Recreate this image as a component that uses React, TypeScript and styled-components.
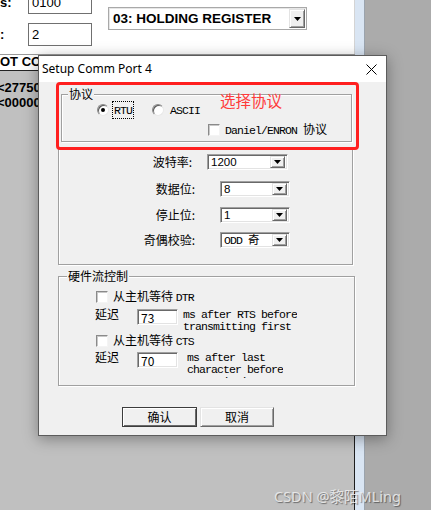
import React from "react";
import styled, { createGlobalStyle, css } from "styled-components";

const cjk = `"Noto Sans CJK SC", sans-serif`;

const GlobalStyle = createGlobalStyle`
  html, body { margin: 0; padding: 0; }
  body {
    background: #ababab;
    font-family: "Liberation Sans", Arial, sans-serif;
  }
`;

const sunken = css`
  box-sizing: border-box;
  background: #fff;
  border: 1px solid;
  border-color: #a0a0a0 #fff #fff #a0a0a0;
  box-shadow: inset 1px 1px 0 #696969, inset -1px -1px 0 #e3e3e3;
`;

const raised = css`
  box-sizing: border-box;
  background: #f0f0f0;
  border: 1px solid;
  border-color: #e3e3e3 #696969 #696969 #e3e3e3;
  box-shadow: inset 1px 1px 0 #fff, inset -1px -1px 0 #a0a0a0;
`;

/* ---------- background window ---------- */

const Page = styled.div`
  position: relative;
  display: flex;
  width: 431px;
  height: 510px;
  overflow: hidden;
  background: #ababab;
`;

const LeftPane = styled.div`
  display: flex;
  flex-direction: column;
  width: 355px;
`;

const TopForm = styled.div`
  display: flex;
  height: 55px;
  background: #fff;
  overflow: hidden;
  box-sizing: border-box;
  border-right: 1px solid #d4d4d4;
`;

const FieldCol = styled.div`
  display: flex;
  flex-direction: column;
  gap: 9px;
  margin-top: -9px;
`;

const FieldRow = styled.div`
  display: flex;
  align-items: center;
  height: 23px;
`;

const FieldLabel = styled.span`
  width: 28px;
  font-size: 13px;
  font-weight: bold;
`;

const FieldInput = styled.div`
  box-sizing: border-box;
  width: 64px;
  height: 23px;
  padding-left: 3px;
  border: 1px solid #707070;
  font-size: 13px;
  line-height: 21px;
`;

const BigCombo = styled.div`
  box-sizing: border-box;
  display: flex;
  align-items: center;
  justify-content: space-between;
  width: 199px;
  height: 23px;
  margin: 7px 0 0 16px;
  padding: 0 1px 0 4px;
  border: 1px solid #a9a9a9;
  box-shadow: inset 1px 1px 0 #e6e6e6;
  font-size: 13.5px;
  font-weight: bold;
`;

const BigDrop = styled.div`
  ${raised};
  display: flex;
  align-items: center;
  justify-content: center;
  width: 16px;
  height: 19px;
`;

const HeaderRow = styled.div`
  height: 15px;
  background: #fff;
  border-top: 1px solid #9a9a9a;
  border-bottom: 1px solid #222;
  box-sizing: content-box;
  font-size: 13px;
  font-weight: bold;
  line-height: 14px;
  white-space: nowrap;
  overflow: hidden;
  margin-top: -1px;
`;

const GrayArea = styled.div`
  flex: 1;
  padding-top: 9px;
  background: #c0c0c0;
  border-right: 1px solid #1e1e1e;
  font-size: 13px;
  font-weight: bold;
  line-height: 15px;
  white-space: nowrap;
`;

const ClipText = styled.div`
  margin-left: -3px;
`;

const BlueStrip = styled.div`
  width: 9px;
  background: #d9e5f3;
  border-right: 1px solid #9aa3ad;
`;

const RightGray = styled.div`
  flex: 1;
  background: #ababab;
`;

/* ---------- dialog ---------- */

const Dialog = styled.div`
  position: absolute;
  left: 38px;
  top: 55px;
  width: 349px;
  height: 381px;
  box-sizing: border-box;
  display: flex;
  flex-direction: column;
  background: #f0f0f0;
  border: 1px solid #5c5c5c;
  box-shadow: 0 3px 14px rgba(0, 0, 0, 0.35);
  font-family: ${cjk};
  font-size: 12px;
  line-height: 14px;
  color: #000;
`;

const TitleBar = styled.div`
  display: flex;
  align-items: center;
  justify-content: space-between;
  height: 26px;
  padding-left: 3px;
  background: #fff;
`;

const Title = styled.span`
  font-family: "Noto Sans", "Liberation Sans", sans-serif;
  font-size: 12px;
`;

const CloseBtn = styled.div`
  display: flex;
  align-items: center;
  justify-content: center;
  width: 30px;
  height: 26px;
`;

const Body = styled.div`
  position: relative;
  display: flex;
  flex-direction: column;
  padding-top: 12px;
`;

const Group = styled.div<{ $left: number; $w: number; $h: number; $mt: number }>`
  position: relative;
  box-sizing: border-box;
  display: flex;
  flex-direction: column;
  margin: ${(p) => p.$mt}px 0 0 ${(p) => p.$left}px;
  width: ${(p) => p.$w}px;
  height: ${(p) => p.$h}px;
  border: 1px solid #a0a0a0;
  box-shadow: inset 1px 1px 0 #fff, 1px 1px 0 #fff;
`;

const GroupLabel = styled.span<{ $left: number }>`
  position: absolute;
  top: -8px;
  left: ${(p) => p.$left}px;
  padding: 0 1px;
  background: #f0f0f0;
`;

const Mono = styled.span`
  font-family: "Liberation Mono", monospace;
  font-size: 11.5px;
  letter-spacing: -0.9px;
`;

const RadioRow = styled.div`
  display: flex;
  align-items: center;
  height: 16px;
  margin: 7px 0 0 35px;
`;

const Radio = styled.span<{ $checked?: boolean }>`
  position: relative;
  box-sizing: border-box;
  width: 12px;
  height: 12px;
  border-radius: 50%;
  background: #fff;
  border: 1px solid;
  border-color: #8a8a8a #e8e8e8 #e8e8e8 #8a8a8a;
  box-shadow: inset 1px 1px 0 #5a5a5a;
  &::after {
    content: "";
    display: ${(p) => (p.$checked ? "block" : "none")};
    position: absolute;
    left: 3px;
    top: 3px;
    width: 4px;
    height: 4px;
    border-radius: 50%;
    background: #000;
  }
`;

const RadioText = styled.span<{ $focus?: boolean; $gap: number; $after: number }>`
  margin: 0 ${(p) => p.$after}px 0 ${(p) => p.$gap}px;
  padding: 0 1px;
  line-height: 14px;
  border: 1px dotted ${(p) => (p.$focus ? "#000" : "transparent")};
`;

const CheckRow = styled.div<{ $left: number; $mt: number }>`
  display: flex;
  align-items: center;
  gap: 5px;
  height: 14px;
  margin: ${(p) => p.$mt}px 0 0 ${(p) => p.$left}px;
  white-space: nowrap;
`;

const CheckBox = styled.span`
  box-sizing: border-box;
  width: 12px;
  height: 12px;
  background: #fff;
  border: 1px solid;
  border-color: #8a8a8a #f4f4f4 #f4f4f4 #8a8a8a;
  box-shadow: inset 1px 1px 0 #c8c8c8;
`;

const RedBox = styled.div`
  position: absolute;
  left: 17px;
  top: 0;
  width: 303px;
  height: 68px;
  box-sizing: border-box;
  border: 3px solid #ff1f1f;
  border-radius: 4px;
  pointer-events: none;
`;

const Annotation = styled.span`
  position: absolute;
  left: 161px;
  top: 6px;
  font-family: ${cjk};
  font-size: 15.5px;
  line-height: 18px;
  color: #ff3a3a;
`;

const ParamRow = styled.div<{ $mt: number }>`
  display: flex;
  align-items: center;
  height: 16px;
  margin-top: ${(p) => p.$mt}px;
`;

const ParamLabel = styled.span<{ $w: number }>`
  width: ${(p) => p.$w}px;
  text-align: right;
  white-space: nowrap;
`;

const Combo = styled.div<{ $gap: number; $w: number }>`
  ${sunken};
  display: flex;
  align-items: center;
  justify-content: space-between;
  margin-left: ${(p) => p.$gap}px;
  width: ${(p) => p.$w}px;
  height: 16px;
  padding: 0 2px 0 3px;
  font-family: "Liberation Sans", Arial, ${cjk};
  font-size: 11.5px;
  line-height: 14px;
  white-space: nowrap;
`;

const DropBtn = styled.div`
  ${raised};
  display: flex;
  align-items: center;
  justify-content: center;
  width: 15px;
  height: 12px;
`;

const DelayRow = styled.div<{ $mt: number }>`
  display: flex;
  align-items: flex-start;
  margin: ${(p) => p.$mt}px 0 0 36px;
`;

const DelayLabel = styled.span`
  width: 24px;
  line-height: 12px;
  margin-top: -1px;
`;

const DelayInput = styled.div`
  ${sunken};
  width: 41px;
  height: 16px;
  margin-left: 18px;
  padding-left: 3px;
  font-size: 12px;
  line-height: 15px;
`;

const Note = styled.div<{ $gap: number; $h: number }>`
  margin-left: ${(p) => p.$gap}px;
  height: ${(p) => p.$h}px;
  overflow: hidden;
  font-family: "Liberation Mono", monospace;
  font-size: 11.5px;
  letter-spacing: -0.9px;
  line-height: 12px;
  white-space: pre;
`;

const ButtonRow = styled.div`
  display: flex;
  gap: 3px;
  margin: 21px 0 0 83px;
`;

const Button = styled.div<{ $default?: boolean; $w: number }>`
  ${raised};
  display: flex;
  align-items: center;
  justify-content: center;
  width: ${(p) => p.$w}px;
  height: 20px;
  ${(p) =>
    p.$default &&
    css`
      outline: 1px solid #3c3c3c;
      outline-offset: -1px;
      border-color: #3c3c3c;
      box-shadow: inset 1px 1px 0 #fff, inset -1px -1px 0 #696969;
    `}
`;

const Watermark = styled.span`
  position: absolute;
  left: 274px;
  top: 486px;
  font-family: "Noto Sans", ${cjk};
  font-size: 14.5px;
  line-height: 20px;
  color: rgba(240, 240, 240, 0.85);
  text-shadow: 1px 1px 1px rgba(0, 0, 0, 0.45);
  white-space: nowrap;
`;

const Arrow = ({ w = 7 }: { w?: number }) => (
  <svg width={w} height={4} viewBox={`0 0 ${w} 4`}>
    <polygon points={`0,0 ${w},0 ${w / 2},4`} fill="#000" />
  </svg>
);

const params = [
  { label: "波特率:", value: "1200", mt: 6, labelW: 133, gap: 15, w: 81 },
  { label: "数据位:", value: "8", mt: 11, labelW: 136, gap: 25, w: 70 },
  { label: "停止位:", value: "1", mt: 10, labelW: 136, gap: 25, w: 70 },
  {
    label: "奇偶校验:",
    value: (
      <>
        <Mono>ODD </Mono>奇
      </>
    ),
    mt: 9,
    labelW: 136,
    gap: 25,
    w: 70,
  },
];

export default function App() {
  return (
    <Page>
      <GlobalStyle />
      <LeftPane>
        <TopForm>
          <FieldCol>
            <FieldRow>
              <FieldLabel>s:</FieldLabel>
              <FieldInput>0100</FieldInput>
            </FieldRow>
            <FieldRow>
              <FieldLabel>:</FieldLabel>
              <FieldInput>2</FieldInput>
            </FieldRow>
          </FieldCol>
          <BigCombo>
            03: HOLDING REGISTER
            <BigDrop>
              <Arrow />
            </BigDrop>
          </BigCombo>
        </TopForm>
        <HeaderRow>OT CONFIG</HeaderRow>
        <GrayArea>
          <ClipText>{"<27750"}</ClipText>
          <ClipText>{"<00000"}</ClipText>
        </GrayArea>
      </LeftPane>
      <BlueStrip />
      <RightGray />

      <Dialog>
        <TitleBar>
          <Title>Setup Comm Port 4</Title>
          <CloseBtn>
            <svg width="11" height="11" viewBox="0 0 11 11">
              <path d="M0.5 0.5 L10.5 10.5 M10.5 0.5 L0.5 10.5" stroke="#000" strokeWidth="1" />
            </svg>
          </CloseBtn>
        </TitleBar>
        <Body>
          <Group $left={22} $w={291} $h={48} $mt={0}>
            <GroupLabel $left={6}>协议</GroupLabel>
            <RadioRow>
              <Radio $checked />
              <RadioText $focus $gap={3} $after={18}>
                <Mono>RTU</Mono>
              </RadioText>
              <Radio />
              <RadioText $gap={4} $after={0}>
                <Mono>ASCII</Mono>
              </RadioText>
            </RadioRow>
            <CheckRow $left={146} $mt={5}>
              <CheckBox />
              <span>
                <Mono>Daniel/ENRON </Mono>协议
              </span>
            </CheckRow>
          </Group>

          <Group $left={19} $w={295} $h={118} $mt={5}>
            {params.map((p) => (
              <ParamRow key={p.label} $mt={p.mt}>
                <ParamLabel $w={p.labelW}>{p.label}</ParamLabel>
                <Combo $gap={p.gap} $w={p.w}>
                  <span>{p.value}</span>
                  <DropBtn>
                    <Arrow />
                  </DropBtn>
                </Combo>
              </ParamRow>
            ))}
          </Group>

          <Group $left={19} $w={297} $h={110} $mt={11}>
            <GroupLabel $left={8}>硬件流控制</GroupLabel>
            <CheckRow $left={37} $mt={13}>
              <CheckBox />
              <span>
                从主机等待 <Mono>DTR</Mono>
              </span>
            </CheckRow>
            <DelayRow $mt={5}>
              <DelayLabel>延迟</DelayLabel>
              <DelayInput>73</DelayInput>
              <Note $gap={5} $h={24}>
                {"ms after RTS before\ntransmitting first"}
              </Note>
            </DelayRow>
            <CheckRow $left={37} $mt={1}>
              <CheckBox />
              <span>
                从主机等待 <Mono>CTS</Mono>
              </span>
            </CheckRow>
            <DelayRow $mt={4}>
              <DelayLabel>延迟</DelayLabel>
              <DelayInput>70</DelayInput>
              <Note $gap={9} $h={26}>
                {"ms after last\ncharacter before\ntransmitting"}
              </Note>
            </DelayRow>
          </Group>

          <ButtonRow>
            <Button $default $w={75}>确认</Button>
            <Button $w={74}>取消</Button>
          </ButtonRow>

          <RedBox>
            <Annotation>选择协议</Annotation>
          </RedBox>
        </Body>
      </Dialog>

      <Watermark>CSDN @黎陌MLing</Watermark>
    </Page>
  );
}
